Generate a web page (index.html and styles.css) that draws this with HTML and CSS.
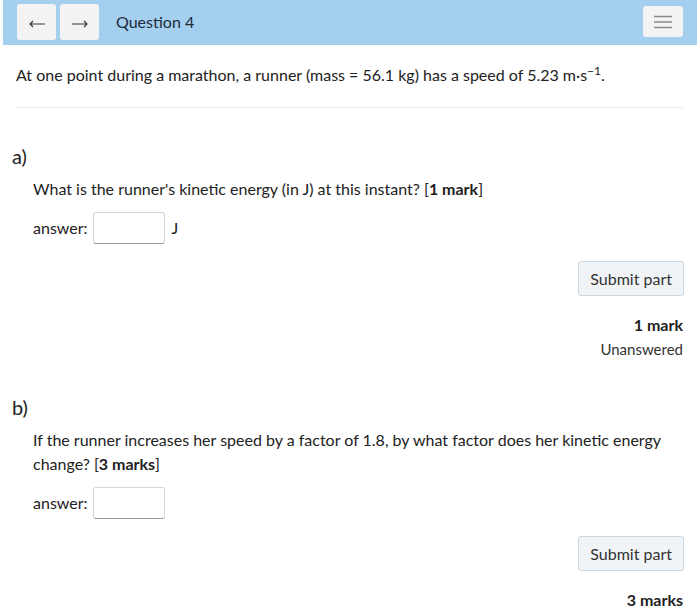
FILE: index.html
```html
<!DOCTYPE html>
<html lang="en">
<head>
  <meta charset="UTF-8">
  <title>Question 4</title>
  <link rel="stylesheet" href="styles.css">
</head>
<body>
  <div class="top-bar">
    <div class="nav-buttons">
      <button class="nav-btn" title="Previous">
        <svg width="16" height="8" viewBox="0 0 16 8">
          <path d="M16 4H1M4 1L1 4l3 3" fill="none" stroke="#333" stroke-width="1.1"/>
        </svg>
      </button>
      <button class="nav-btn" title="Next">
        <svg width="16" height="8" viewBox="0 0 16 8">
          <path d="M0 4h15M12 1l3 3-3 3" fill="none" stroke="#333" stroke-width="1.1"/>
        </svg>
      </button>
    </div>
    <div class="question-title">Question 4</div>
    <button class="menu-btn">
      <svg width="18" height="14" viewBox="0 0 18 14">
        <path d="M0 1.5h18M0 7h18M0 12.5h18" stroke="#8a8a8a" stroke-width="1.6"/>
      </svg>
    </button>
  </div>

  <div class="content">
    <p class="prompt">At one point during a marathon, a runner (mass = 56.1&nbsp;kg) has a speed of 5.23&nbsp;m&middot;s<sup>&minus;1</sup>.</p>
    <hr class="divider">

    <div class="part">
      <div class="part-label">a)</div>
      <div class="part-body">
        <p class="part-text">What is the runner's kinetic energy (in J) at this instant? [<strong>1 mark</strong>]</p>
        <div class="answer-row">
          <span>answer:</span>
          <input class="answer-input" type="text">
          <span class="unit">J</span>
        </div>
      </div>
      <div class="part-footer">
        <button class="submit-btn">Submit part</button>
        <div class="marks">1 mark</div>
        <div class="status">Unanswered</div>
      </div>
    </div>

    <div class="part">
      <div class="part-label">b)</div>
      <div class="part-body">
        <p class="part-text">If the runner increases her speed by a factor of 1.8, by what factor does her kinetic energy change? [<strong>3 marks</strong>]</p>
        <div class="answer-row">
          <span>answer:</span>
          <input class="answer-input" type="text">
        </div>
      </div>
      <div class="part-footer">
        <button class="submit-btn">Submit part</button>
        <div class="marks">3 marks</div>
      </div>
    </div>
  </div>
</body>
</html>
```

FILE: styles.css
```css
body {
  margin: 0;
  font-family: Lato, "Open Sans", sans-serif;
  font-size: 16px;
  line-height: 24px;
  color: #222;
  background: #fff;
}

.top-bar {
  margin: 0 3px;
  height: 45px;
  box-sizing: border-box;
  padding: 0 14px 2px;
  display: flex;
  align-items: center;
  background-color: #a4cfef;
}

.nav-buttons {
  display: flex;
  gap: 4px;
}

.nav-btn {
  width: 39px;
  height: 36px;
  border: none;
  border-radius: 3px;
  background-color: #f3f3f3;
  padding: 4px 0 0;
  display: flex;
  align-items: center;
  justify-content: center;
}

.question-title {
  margin-left: 17px;
  font-size: 16px;
  color: #1d2b3a;
  flex: 1;
}

.menu-btn {
  width: 40px;
  height: 31px;
  border: none;
  border-radius: 3px;
  background-color: #f3f3f3;
  padding: 0;
  display: flex;
  align-items: center;
  justify-content: center;
}

.content {
  padding: 0 17px 0 12px;
}

.prompt {
  margin: 18px 0 20px;
  padding-left: 4px;
}

.prompt sup {
  font-size: 12px;
  line-height: 0;
}

.divider {
  margin: 0 0 0 4px;
  border: none;
  border-top: 1px solid #ececec;
}

.part {
  padding-top: 34px;
}

.part + .part {
  padding-top: 32px;
}

.part-label {
  font-size: 20px;
  line-height: 28px;
}

.part-body {
  padding-left: 21px;
}

.part-text {
  margin: 7px 0 11px;
}

.answer-row {
  display: flex;
  align-items: center;
  gap: 5px;
}

.answer-input {
  width: 72px;
  height: 32px;
  box-sizing: border-box;
  border: 1px solid #d5d5d5;
  border-bottom-color: #999;
  border-radius: 3px;
  background: #fff;
}

.unit {
  margin-left: 2px;
}

.part-footer {
  display: flex;
  flex-direction: column;
  align-items: flex-end;
  margin-top: 17px;
}

.submit-btn {
  height: 35px;
  padding: 0 11px;
  border: 1px solid #ccd6e0;
  border-radius: 3px;
  background-color: #f1f4f7;
  color: #333;
  font-family: Lato, "Open Sans", sans-serif;
  font-size: 16px;
  margin-right: -1px;
}

.marks {
  margin-top: 17px;
  font-weight: bold;
}

.status {
  color: #333;
  font-size: 15px;
}
```
